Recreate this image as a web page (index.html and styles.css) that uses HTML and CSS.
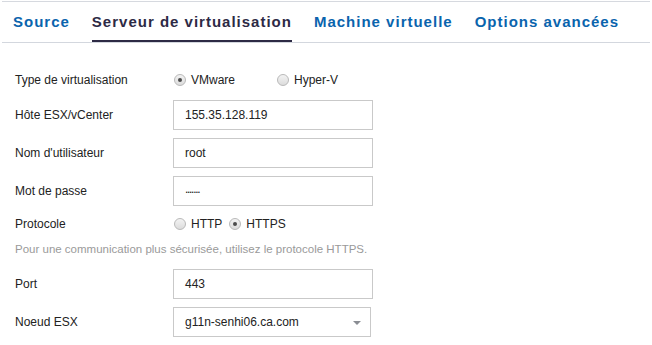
FILE: index.html
```html
<!DOCTYPE html>
<html lang="fr">
<head>
<meta charset="utf-8">
<title>Serveur de virtualisation</title>
<link rel="stylesheet" href="styles.css">
</head>
<body>
<div class="page">
  <nav class="tabs">
    <span class="tab">Source</span>
    <span class="tab active">Serveur de virtualisation</span>
    <span class="tab">Machine virtuelle</span>
    <span class="tab">Options avancées</span>
  </nav>
  <form class="form">
    <div class="row row-radio first">
      <span class="label">Type de virtualisation</span>
      <div class="radios">
        <label class="radio"><span class="dot checked"></span>VMware</label>
        <label class="radio wide"><span class="dot"></span>Hyper-V</label>
      </div>
    </div>
    <div class="row row-input">
      <span class="label">Hôte ESX/vCenter</span>
      <div class="field">155.35.128.119</div>
    </div>
    <div class="row row-input">
      <span class="label">Nom d'utilisateur</span>
      <div class="field">root</div>
    </div>
    <div class="row row-input">
      <span class="label">Mot de passe</span>
      <div class="field pwd">.......</div>
    </div>
    <div class="row row-radio">
      <span class="label">Protocole</span>
      <div class="radios">
        <label class="radio"><span class="dot"></span>HTTP</label>
        <label class="radio"><span class="dot checked"></span>HTTPS</label>
      </div>
    </div>
    <p class="hint">Pour une communication plus sécurisée, utilisez le protocole HTTPS.</p>
    <div class="row row-input">
      <span class="label">Port</span>
      <div class="field">443</div>
    </div>
    <div class="row row-input">
      <span class="label">Noeud ESX</span>
      <div class="field select">g11n-senhi06.ca.com<span class="arrow"></span></div>
    </div>
  </form>
</div>
</body>
</html>
```
FILE: styles.css
```css
html, body {
  margin: 0;
  padding: 0;
  background: #ffffff;
}
.page {
  width: 652px;
  height: 345px;
  overflow: hidden;
  font-family: "Liberation Sans", Arial, sans-serif;
  color: #222222;
}
.tabs {
  margin: 1px 2px 0 2px;
  border-top: 1px solid #d6d9df;
  border-bottom: 1px solid #d3d7de;
  height: 40px;
  display: flex;
  gap: 22px;
  padding-left: 11px;
  box-sizing: content-box;
}
.tab {
  flex: none;
  white-space: nowrap;
  display: flex;
  align-items: center;
  height: 37px;
  padding-top: 2px;
  font-family: "Liberation Sans", Arial, sans-serif;
  font-size: 15px;
  font-weight: bold;
  letter-spacing: 1px;
  color: #0a64ad;
  border-bottom: 2px solid transparent;
  margin-top: -1px;
}
.tab.active {
  color: #2d2a45;
  border-bottom-color: #2d2a45;
}
.form {
  margin: 0;
  padding: 27px 0 0 15px;
  display: flex;
  flex-direction: column;
  font-size: 12px;
}
.row {
  display: flex;
  align-items: center;
}
.label {
  width: 158px;
  flex: none;
}
.row-radio {
  height: 20px;
  margin-bottom: 10px;
}
.row-radio:not(.first) {
  margin-top: 0;
  margin-bottom: 7px;
}
.row-input {
  height: 30px;
  margin-bottom: 8px;
}
.radios {
  display: flex;
  align-items: center;
}
.radio {
  display: flex;
  align-items: center;
  gap: 5px;
  margin-right: 6px;
}
.radio.wide {
  margin-left: 35px;
}
.dot {
  width: 10px;
  height: 10px;
  border-radius: 50%;
  border: 1px solid #b9b9b9;
  background: linear-gradient(#f3f3f3, #dcdcdc);
  display: flex;
  align-items: center;
  justify-content: center;
  margin-left: 1px;
}
.dot.checked::after {
  content: "";
  width: 4px;
  height: 4px;
  border-radius: 50%;
  background: #4c4c4c;
}
.field {
  width: 200px;
  height: 30px;
  box-sizing: border-box;
  border: 1px solid #c9c9c9;
  padding: 0 11px;
  display: flex;
  align-items: center;
  color: #222222;
}
.pwd {
  letter-spacing: -1.3px;
  font-size: 12px;
  padding-bottom: 4px;
  color: #111111;
}
.select {
  width: 198px;
  position: relative;
}
.arrow {
  position: absolute;
  right: 9px;
  top: 13px;
  width: 0;
  height: 0;
  border-left: 4px solid transparent;
  border-right: 4px solid transparent;
  border-top: 4px solid #8a8d93;
}
.hint {
  margin: 0 0 12px 0;
  height: 16px;
  line-height: 16px;
  color: #9a9a9a;
  font-size: 11.5px;
}
```
